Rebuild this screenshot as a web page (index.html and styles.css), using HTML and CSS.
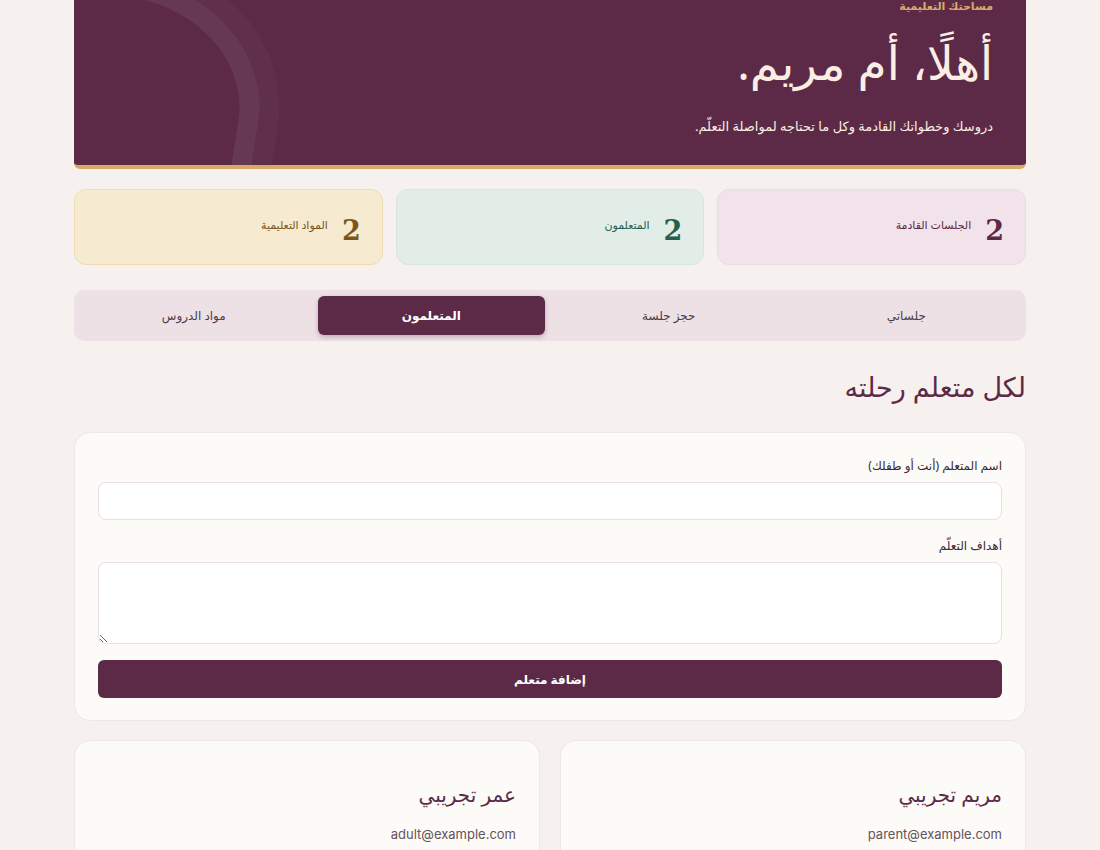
FILE: index.html
```html
<!DOCTYPE html>
<html lang="ar" dir="rtl">
<head>
    <meta charset="UTF-8">
    <meta name="viewport" content="width=device-width, initial-scale=1.0">
    <title>مساحتك التعليمية</title>
    <link rel="stylesheet" href="styles.css">
</head>
<body>
    <div class="page">
        <header class="hero">
            <div class="hero-ring hero-ring-outer"></div>
            <div class="hero-ring"></div>
            <div class="hero-text">
                <span class="hero-label">مساحتك التعليمية</span>
                <h1>أهلًا، أم مريم.</h1>
                <p>دروسك وخطواتك القادمة وكل ما تحتاجه لمواصلة التعلّم.</p>
            </div>
        </header>

        <div class="stats">
            <div class="stat stat-sessions">
                <span class="stat-num">2</span>
                <span class="stat-label">الجلسات القادمة</span>
            </div>
            <div class="stat stat-learners">
                <span class="stat-num">2</span>
                <span class="stat-label">المتعلمون</span>
            </div>
            <div class="stat stat-materials">
                <span class="stat-num">2</span>
                <span class="stat-label">المواد التعليمية</span>
            </div>
        </div>

        <nav class="tabs">
            <button class="tab">جلساتي</button>
            <button class="tab">حجز جلسة</button>
            <button class="tab active">المتعلمون</button>
            <button class="tab">مواد الدروس</button>
        </nav>

        <h2 class="section-title">لكل متعلم رحلته</h2>

        <form class="card form-card">
            <label for="learner-name">اسم المتعلم (أنت أو طفلك)</label>
            <input type="text" id="learner-name">
            <label for="learner-goals">أهداف التعلّم</label>
            <textarea id="learner-goals"></textarea>
            <button type="button" class="add-btn">إضافة متعلم</button>
        </form>

        <div class="learners">
            <div class="card learner">
                <h3>مريم تجريبي</h3>
                <div class="email">parent@example.com</div>
            </div>
            <div class="card learner">
                <h3>عمر تجريبي</h3>
                <div class="email">adult@example.com</div>
            </div>
        </div>
    </div>
</body>
</html>
```

FILE: styles.css
```css
body {
    margin: 0;
    background-color: #f6f1ee;
    font-family: "Noto Sans", "DejaVu Sans", sans-serif;
    color: #3a2a31;
}
.page {
    max-width: 952px;
    margin: -27px auto 0;
    padding-bottom: 40px;
}
.hero {
    position: relative;
    overflow: hidden;
    background-color: #5c2a47;
    border-bottom: 4px solid #d9a967;
    border-radius: 0 0 6px 6px;
    padding: 25px 33px 30px;
}
/* decorative arch on the left side of the banner */
.hero-ring {
    position: absolute;
    left: -104px;
    top: 3px;
    width: 250px;
    height: 420px;
    border: 20px solid rgba(255, 255, 255, 0.065);
    border-bottom: none;
    border-radius: 145px 145px 0 0 / 125px 125px 0 0;
    transform-origin: 145px 125px;
    transform: rotate(9deg);
}
.hero-ring-outer {
    left: -124px;
    top: -17px;
    width: 290px;
    height: 460px;
    border-color: rgba(255, 255, 255, 0.025);
    border-radius: 165px 165px 0 0 / 145px 145px 0 0;
    transform-origin: 165px 145px;
}
.hero-text {
    position: relative;
    text-align: right;
    color: #fbeee4;
}
.hero-label {
    display: block;
    font-size: 11px;
    font-weight: bold;
    color: #d9a967;
    line-height: 16px;
}
.hero h1 {
    margin: 12px 0 0;
    font-size: 47px;
    font-weight: normal;
    line-height: 72px;
}
.hero p {
    margin: 19px 0 0;
    font-size: 13px;
    line-height: 18px;
}
.stats {
    display: grid;
    grid-template-columns: repeat(3, 1fr);
    gap: 13px;
    margin-top: 20px;
}
.stat {
    display: flex;
    align-items: center;
    gap: 14px;
    height: 74px;
    padding: 0 21px;
    border-radius: 12px;
    border: 1px solid;
}
.stat-num {
    font-family: "DejaVu Serif", "Liberation Serif", serif;
    font-weight: bold;
    font-size: 27px;
    margin-top: 6px;
}
.stat-label {
    font-size: 11px;
    margin-top: -6px;
}
.stat-sessions {
    background-color: #f2e3ea;
    border-color: #ecdbe3;
    color: #5c2a47;
}
.stat-learners {
    background-color: #e2ede8;
    border-color: #d7e6df;
    color: #24604c;
}
.stat-materials {
    background-color: #f6ead0;
    border-color: #efdcb2;
    color: #7a5520;
}
.tabs {
    display: grid;
    grid-template-columns: repeat(4, 1fr);
    gap: 10px;
    margin-top: 25px;
    padding: 6px;
    background-color: #ede1e6;
    border-radius: 10px;
}
.tab {
    height: 39px;
    border: none;
    border-radius: 6px;
    background: none;
    font-family: inherit;
    font-size: 12px;
    color: #4d3a42;
}
.tab.active {
    background-color: #5c2a47;
    color: white;
    font-weight: bold;
    box-shadow: 0 2px 5px rgba(92, 42, 71, 0.3);
}
.section-title {
    margin: 27px 0 27px;
    font-size: 27px;
    font-weight: normal;
    color: #5c2a47;
}
.card {
    background-color: #fdfbf8;
    border: 1px solid #efe7e5;
    border-radius: 16px;
}
.form-card {
    display: flex;
    flex-direction: column;
    padding: 24px 23px 22px;
}
.form-card label {
    font-size: 12px;
    line-height: 18px;
    margin-bottom: 7px;
}
.form-card input,
.form-card textarea {
    box-sizing: border-box;
    background-color: white;
    border: 1px solid #e8dfe2;
    border-radius: 8px;
    font-family: inherit;
}
.form-card input {
    height: 38px;
    margin-bottom: 17px;
}
.form-card textarea {
    height: 82px;
    margin-bottom: 16px;
}
.add-btn {
    height: 38px;
    border: none;
    border-radius: 6px;
    background-color: #5c2a47;
    color: white;
    font-family: inherit;
    font-size: 12px;
    font-weight: bold;
}
.learners {
    display: grid;
    grid-template-columns: 1fr 1fr;
    gap: 20px;
    margin-top: 19px;
}
.learner {
    padding: 40px 23px 24px;
}
.learner h3 {
    margin: 0;
    font-size: 20px;
    font-weight: normal;
    color: #5c2a47;
}
.learner .email {
    margin-top: 18px;
    font-family: Inter, "Noto Sans", sans-serif;
    font-size: 13px;
    color: #62555a;
}
```
